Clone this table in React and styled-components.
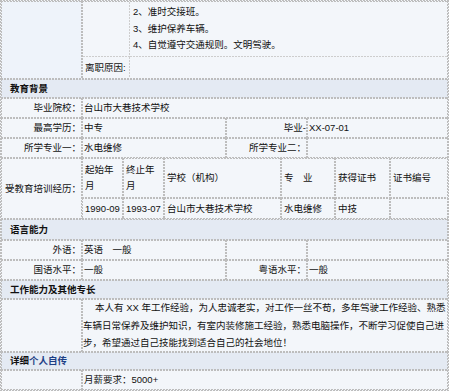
import React from "react";
import styled, { createGlobalStyle, css } from "styled-components";

const LINE = "#bdbdbd";
const SOFT = "#cdcdcd";
const BG = "#f3f6fa";
const SIDE = "#eef3fa";
const HEAD = "#e4eaf3";

const Global = createGlobalStyle`
  html, body { margin: 0; padding: 0; background: ${BG}; }
  body {
    font-family: "Liberation Sans", "Noto Sans CJK SC", sans-serif;
    font-size: 9.5px;
    color: #111;
  }
`;

const dash = (sides, color) => {
  const H = `repeating-linear-gradient(to right, ${color} 0 2px, transparent 2px 3px)`;
  const V = `repeating-linear-gradient(to bottom, ${color} 0 2px, transparent 2px 3px)`;
  const map = {
    t: [H, "100% 1px", "left top"],
    b: [H, "100% 1px", "left bottom"],
    l: [V, "1px 100%", "left top"],
    r: [V, "1px 100%", "right top"],
  };
  const list = sides.split("").filter(Boolean).map((s) => map[s]);
  if (!list.length) return css`background-image: none;`;
  return css`
    background-image: ${list.map((l) => l[0]).join(", ")};
    background-size: ${list.map((l) => l[1]).join(", ")};
    background-position: ${list.map((l) => l[2]).join(", ")};
    background-repeat: no-repeat;
  `;
};

const Sheet = styled.table`
  width: 449px;
  padding: 1px;
  table-layout: fixed;
  border-collapse: separate;
  border-spacing: 0;
  background-color: ${BG};
  ${dash("tblr", LINE)}
`;

const Inner = styled.table`
  width: 100%;
  table-layout: fixed;
  border-collapse: separate;
  border-spacing: 0;
`;

const Cell = styled.td`
  box-sizing: border-box;
  height: ${(p) => p.$h ?? 20}px;
  padding: 0 ${(p) => p.$px ?? 2}px;
  line-height: ${(p) => p.$lh ?? 14}px;
  vertical-align: middle;
  text-align: ${(p) => p.$align ?? "left"};
  white-space: nowrap;
  overflow: hidden;
  background-color: ${(p) => p.$bg ?? BG};
  ${(p) => dash(p.$sides ?? "tblr", p.$line ?? LINE)}
`;

const Label = styled(Cell)`
  text-align: right;
  padding: 0 1px 0 2px;
`;

const Photo = styled(Cell)`
  background-color: ${SIDE};
`;

const Holder = styled.td`
  padding: ${(p) => p.$pad ?? 0}px;
  vertical-align: top;
  background-color: ${BG};
  ${(p) => dash(p.$sides ?? "", LINE)}
`;

const Section = styled(Cell)`
  background-color: ${HEAD};
  font-weight: bold;
  padding-left: 9px;
  color: #101010;
`;

const Blue = styled.span`
  color: #1d3f86;
`;

const Duties = styled(Cell)`
  padding: 2px 3px 0;
  line-height: 16.5px;
  vertical-align: top;
`;

const Item = styled.div``;

const Edu = styled(Cell)`
  white-space: normal;
  padding: 0 3px;
  line-height: 16px;
`;

const Story = styled(Cell)`
  line-height: 17.5px;
  padding: 0 2px 0 1px;
`;

const Line = styled.div`
  padding-left: ${(p) => (p.$first ? 12 : 0)}px;
`;

const duties = ["2、准时交接班。", "3、维护保养车辆。", "4、自觉遵守交通规则。文明驾驶。"];

const eduHead = ["起始年月", "终止年月", "学校（机构）", "专　业", "获得证书", "证书编号"];
const eduRow = ["1990-09", "1993-07", "台山市大巷技术学校", "水电维修", "中技", ""];

export default function App() {
  return (
    <>
      <Global />
      <Sheet>
        <colgroup>
          <col style={{ width: 81 }} />
          <col style={{ width: 144 }} />
          <col style={{ width: 81 }} />
          <col style={{ width: 141 }} />
        </colgroup>
        <tbody>
          <tr>
            <Photo $h={78} />
            <Holder colSpan={3} $sides="tblr" $pad={1}>
              <Inner>
                <colgroup>
                  <col style={{ width: 47 }} />
                  <col />
                </colgroup>
                <tbody>
                  <tr>
                    <Cell $h={55} $sides="rb" $line={SOFT} />
                    <Duties $h={55} $sides="b" $line={SOFT}>
                      {duties.map((d) => (
                        <Item key={d}>{d}</Item>
                      ))}
                    </Duties>
                  </tr>
                  <tr>
                    <Cell $h={21} $sides="r" $line={SOFT}>离职原因:</Cell>
                    <Cell $h={21} $sides="" />
                  </tr>
                </tbody>
              </Inner>
            </Holder>
          </tr>

          <tr>
            <Section colSpan={4} $h={19}>教育背景</Section>
          </tr>
          <tr>
            <Label>毕业院校：</Label>
            <Cell colSpan={3}>台山市大巷技术学校</Cell>
          </tr>
          <tr>
            <Label>最高学历：</Label>
            <Cell>中专</Cell>
            <Label>毕业-</Label>
            <Cell>XX-07-01</Cell>
          </tr>
          <tr>
            <Label>所学专业一：</Label>
            <Cell>水电维修</Cell>
            <Label>所学专业二：</Label>
            <Cell />
          </tr>
          <tr>
            <Label $h={61}>受教育培训经历：</Label>
            <Holder colSpan={3}>
              <Inner>
                <colgroup>
                  <col style={{ width: 41 }} />
                  <col style={{ width: 41 }} />
                  <col style={{ width: 117 }} />
                  <col style={{ width: 54 }} />
                  <col style={{ width: 55 }} />
                  <col />
                </colgroup>
                <tbody>
                  <tr>
                    {eduHead.map((t) => (
                      <Edu key={t} $h={40}>{t}</Edu>
                    ))}
                  </tr>
                  <tr>
                    {eduRow.map((t, i) => (
                      <Edu key={i} $h={21} $px={2}>{t}</Edu>
                    ))}
                  </tr>
                </tbody>
              </Inner>
            </Holder>
          </tr>

          <tr>
            <Section colSpan={4} $h={21}>语言能力</Section>
          </tr>
          <tr>
            <Label>外语：</Label>
            <Cell>英语　一般</Cell>
            <Label />
            <Cell />
          </tr>
          <tr>
            <Label>国语水平：</Label>
            <Cell>一般</Cell>
            <Label>粤语水平：</Label>
            <Cell>一般</Cell>
          </tr>

          <tr>
            <Section colSpan={4} $h={19}>工作能力及其他专长</Section>
          </tr>
          <tr>
            <Cell $h={52} />
            <Story colSpan={3} $h={52}>
              <Line $first>本人有 XX 年工作经验，为人忠诚老实，对工作一丝不苟，多年驾驶工作经验、熟悉</Line>
              <Line>车辆日常保养及维护知识，有室内装修施工经验，熟悉电脑操作，不断学习促使自己进</Line>
              <Line>步，希望通过自己技能找到适合自己的社会地位！</Line>
            </Story>
          </tr>

          <tr>
            <Section colSpan={4} $h={18}>
              详细<Blue>个人自传</Blue>
            </Section>
          </tr>
          <tr>
            <Cell />
            <Cell colSpan={3}>月薪要求：5000+</Cell>
          </tr>
        </tbody>
      </Sheet>
    </>
  );
}
